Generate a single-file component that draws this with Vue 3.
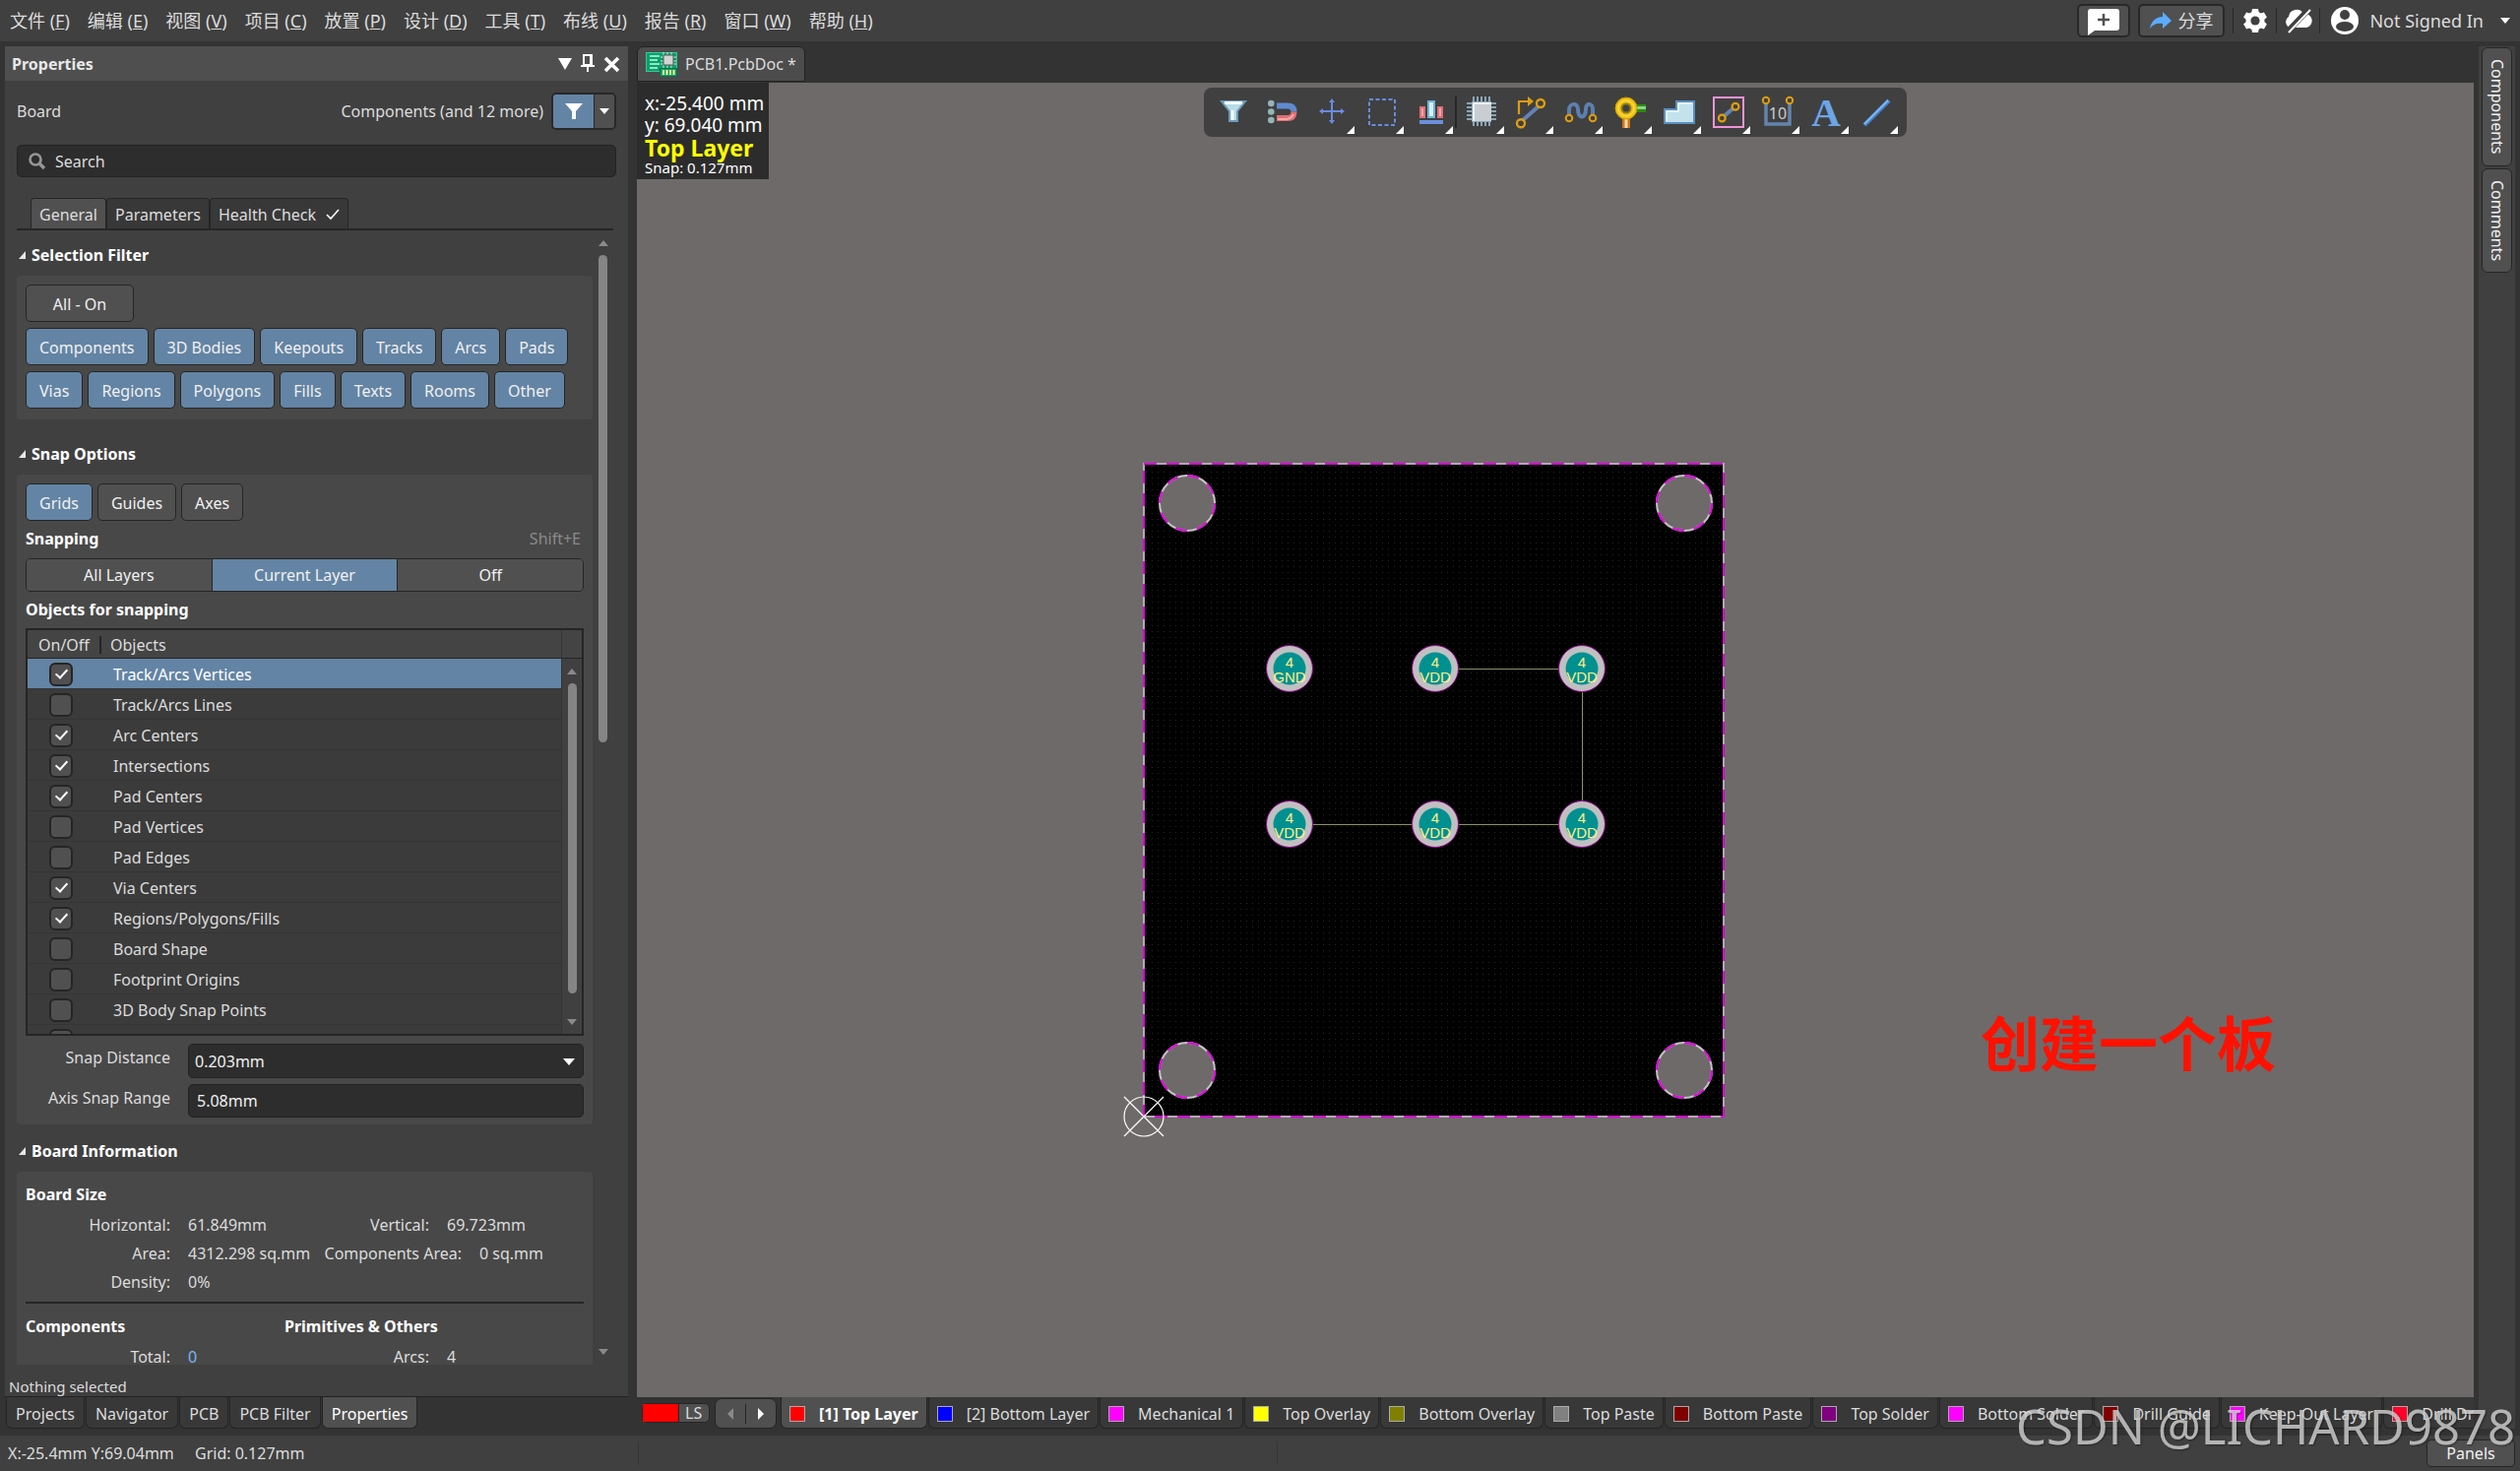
<script setup>
import { ref } from 'vue'

const menus = [
  ['文件', 'F'], ['编辑', 'E'], ['视图', 'V'], ['项目', 'C'], ['放置', 'P'], ['设计', 'D'],
  ['工具', 'T'], ['布线', 'U'], ['报告', 'R'], ['窗口', 'W'], ['帮助', 'H'],
]
const filterRows = [
  ['Components', '3D Bodies', 'Keepouts', 'Tracks', 'Arcs', 'Pads'],
  ['Vias', 'Regions', 'Polygons', 'Fills', 'Texts', 'Rooms', 'Other'],
]
const snapObjects = ref([
  { name: 'Track/Arcs Vertices', on: true },
  { name: 'Track/Arcs Lines', on: false },
  { name: 'Arc Centers', on: true },
  { name: 'Intersections', on: true },
  { name: 'Pad Centers', on: true },
  { name: 'Pad Vertices', on: false },
  { name: 'Pad Edges', on: false },
  { name: 'Via Centers', on: true },
  { name: 'Regions/Polygons/Fills', on: true },
  { name: 'Board Shape', on: false },
  { name: 'Footprint Origins', on: false },
  { name: '3D Body Snap Points', on: false },
  { name: '', on: false },
])
const panelTabs = ['Projects', 'Navigator', 'PCB', 'PCB Filter', 'Properties']
const layers = [
  ['[1] Top Layer', '#ff0000'], ['[2] Bottom Layer', '#0000ff'], ['Mechanical 1', '#ff00ff'],
  ['Top Overlay', '#ffff00'], ['Bottom Overlay', '#808000'], ['Top Paste', '#808080'],
  ['Bottom Paste', '#800000'], ['Top Solder', '#800080'], ['Bottom Solder', '#ff00ff'],
  ['Drill Guide', '#800000'], ['Keep-Out Layer', '#ff00ff'], ['Drill Drawing', '#ff002a'],
]
const holes = [[44, 40], [549, 40], [44, 616], [549, 616]]
const pads = [
  { x: 148, y: 208, net: 'GND' }, { x: 296, y: 208, net: 'VDD' }, { x: 445, y: 208, net: 'VDD' },
  { x: 148, y: 366, net: 'VDD' }, { x: 296, y: 366, net: 'VDD' }, { x: 445, y: 366, net: 'VDD' },
]
const search = ref('')
const snapDistance = ref('0.203mm')
const axisRange = ref('5.08mm')
</script>

<template>
  <div class="app">
    <header class="menubar">
      <nav class="menus">
        <a v-for="m in menus" :key="m[1]" href="#">{{ m[0] }} (<u>{{ m[1] }}</u>)</a>
      </nav>
      <div class="account">
        <button class="top-btn note" aria-label="Add comment">
          <svg width="32" height="28" viewBox="0 0 32 28"><path d="M3 0H29Q32 0 32 3V19Q32 22 29 22H7L0 27V3Q0 0 3 0Z" fill="#fff"/><path d="M16 5V17M10 11H22" stroke="#505050" stroke-width="2.5"/></svg>
        </button>
        <button class="top-btn share">
          <svg width="22" height="18" viewBox="0 0 22 18"><path d="M13 0L22 9L13 17V12C7 11 3 13 0 17C1 10 6 5 13 5Z" fill="#5cabff"/></svg>
          分享
        </button>
        <i class="sep"></i>
        <button class="icon-btn" aria-label="Settings">
          <svg width="26" height="26" viewBox="0 0 26 26"><g fill="#fff"><circle cx="13" cy="13" r="9.5"/><path d="M10 1H16L17 6H9Z"/><path d="M10 25H16L17 20H9Z"/><path d="M10 1H16L17 6H9Z" transform="rotate(60 13 13)"/><path d="M10 1H16L17 6H9Z" transform="rotate(120 13 13)"/><path d="M10 1H16L17 6H9Z" transform="rotate(240 13 13)"/><path d="M10 1H16L17 6H9Z" transform="rotate(300 13 13)"/></g><circle cx="13" cy="13" r="4.6" fill="#404040"/></svg>
        </button>
        <i class="sep"></i>
        <button class="icon-btn" aria-label="Cloud disconnected">
          <svg width="28" height="26" viewBox="0 0 28 26"><path d="M6 20A6 6 0 0 1 4 9A8 8 0 0 1 19 6A7 7 0 0 1 22 20Z" fill="#fff"/><path d="M2 25L24 2" stroke="#404040" stroke-width="6"/><path d="M4 25L26 2" stroke="#fff" stroke-width="2"/></svg>
        </button>
        <i class="sep"></i>
        <button class="user">
          <svg width="28" height="28" viewBox="0 0 28 28"><circle cx="14" cy="14" r="14" fill="#fff"/><circle cx="14" cy="8" r="5" fill="#404040"/><ellipse cx="14" cy="20" rx="9" ry="5" fill="#404040"/></svg>
          Not Signed In
          <svg class="caret" width="10" height="6" viewBox="0 0 10 6"><path d="M0 0H10L5 6Z" fill="#fff"/></svg>
        </button>
      </div>
    </header>

    <div class="work">
      <aside class="left">
        <section class="panel">
          <div class="panel-head">
            <h1>Properties</h1>
            <svg width="64" height="20" viewBox="0 0 64 20"><path d="M0 4H14L7 16Z" fill="#fff"/><path d="M26 1H34V11H26Z" fill="none" stroke="#fff" stroke-width="2"/><path d="M32 1H35V11H32ZM23 11H37V13H23ZM29 13H31V18H29Z" fill="#fff"/><path d="M48 4L61 17M61 4L48 17" stroke="#fff" stroke-width="3.6"/></svg>
          </div>
          <div class="scope">
            <span>Board</span>
            <span class="grow">Components (and 12 more)</span>
            <div class="split">
              <button class="funnel" aria-label="Filter"><svg width="18" height="16" viewBox="0 0 18 16"><path d="M0 0H18L11 8V16H7V8Z" fill="#fff"/></svg></button>
              <button class="drop" aria-label="Filter options"><svg width="10" height="6" viewBox="0 0 10 6"><path d="M0 0H10L5 6Z" fill="#fff"/></svg></button>
            </div>
          </div>
          <label class="search">
            <svg width="18" height="18" viewBox="0 0 18 18"><circle cx="7" cy="7" r="5.5" fill="none" stroke="#969696" stroke-width="2.6"/><path d="M11 11L16 16" stroke="#969696" stroke-width="3.4"/></svg>
            <input v-model="search" placeholder="Search" aria-label="Search">
          </label>
          <div class="tabs">
            <button class="active">General</button>
            <button>Parameters</button>
            <button>Health Check
              <svg width="14" height="12" viewBox="0 0 14 12"><path d="M1 6L5 10L13 1" fill="none" stroke="#fff" stroke-width="1.6"/></svg>
            </button>
          </div>

          <div class="scroll">
            <div class="sections">
              <h2>Selection Filter</h2>
              <div class="card filters">
                <div class="chips"><button class="chip all">All - On</button></div>
                <div v-for="(row, i) in filterRows" :key="i" class="chips">
                  <button v-for="c in row" :key="c" class="chip on">{{ c }}</button>
                </div>
              </div>

              <h2 class="snap-title">Snap Options</h2>
              <div class="card snap">
                <div class="chips">
                  <button class="chip on">Grids</button><button class="chip">Guides</button><button class="chip">Axes</button>
                </div>
                <div class="sub"><h3>Snapping</h3><span class="hint">Shift+E</span></div>
                <div class="segments"><button>All Layers</button><button class="on">Current Layer</button><button>Off</button></div>
                <div class="sub"><h3>Objects for snapping</h3></div>
                <div class="grid-box">
                  <table>
                    <thead><tr><th class="c1">On/Off</th><th>Objects</th></tr></thead>
                    <tbody>
                      <tr v-for="(o, i) in snapObjects" :key="i" :class="{ selected: i === 0 }">
                        <td><input v-model="o.on" type="checkbox" :aria-label="o.name || 'Snap object'"></td>
                        <td class="name">{{ o.name }}</td>
                      </tr>
                    </tbody>
                  </table>
                  <div class="bar inner">
                    <svg width="10" height="6" viewBox="0 0 10 6"><path d="M0 6H10L5 0Z" fill="#8a8a8a"/></svg>
                    <i></i>
                    <svg width="10" height="6" viewBox="0 0 10 6"><path d="M0 0H10L5 6Z" fill="#8a8a8a"/></svg>
                  </div>
                </div>
                <div class="field">
                  <label for="snap-distance">Snap Distance</label>
                  <div class="select">
                    <select id="snap-distance" v-model="snapDistance"><option>0.203mm</option></select>
                    <svg width="12" height="7" viewBox="0 0 12 7"><path d="M0 0H12L6 7Z" fill="#fff"/></svg>
                  </div>
                </div>
                <div class="field">
                  <label for="axis-range">Axis Snap Range</label>
                  <input id="axis-range" v-model="axisRange">
                </div>
              </div>

              <h2 class="info-title">Board Information</h2>
              <div class="card info">
                <h3>Board Size</h3>
                <dl>
                  <dt>Horizontal:</dt><dd>61.849mm</dd><dt class="v">Vertical:</dt><dd>69.723mm</dd>
                </dl>
                <dl>
                  <dt>Area:</dt><dd>4312.298 sq.mm</dd><dt class="a">Components Area:</dt><dd class="last">0 sq.mm</dd>
                </dl>
                <dl><dt>Density:</dt><dd>0%</dd></dl>
                <hr>
                <div class="halves"><h3>Components</h3><h3>Primitives &amp; Others</h3></div>
                <dl><dt>Total:</dt><dd class="link">0</dd><dt class="v">Arcs:</dt><dd>4</dd></dl>
              </div>
            </div>
            <div class="bar outer">
              <svg width="10" height="6" viewBox="0 0 10 6"><path d="M0 6H10L5 0Z" fill="#8a8a8a"/></svg>
              <i></i>
              <svg width="10" height="6" viewBox="0 0 10 6"><path d="M0 0H10L5 6Z" fill="#8a8a8a"/></svg>
            </div>
          </div>
          <p class="nothing">Nothing selected</p>
        </section>
        <nav class="panel-tabs">
          <button v-for="t in panelTabs" :key="t" :class="{ active: t === 'Properties' }">{{ t }}</button>
        </nav>
      </aside>

      <main class="editor">
        <div class="doc-tabs">
          <button class="doc">
            <svg width="32" height="26" viewBox="0 0 32 26"><rect x=".5" y="1.500" width="31" height="19" fill="#0ba06c" stroke="#35c795"/><path d="M4 5H14M4 9H12M4 13H14M4 17H12" stroke="#b8ffe0" stroke-width="1.500"/><path d="M18 1V5M22 1V5M26 1V5M18 14V18M22 14V18M26 14V18M15 6H31M15 10H31M15 13H31" stroke="#c8efe0"/><rect x="18" y="4" width="10" height="10" fill="#d4d4d4" stroke="#555"/><rect x="14.500" y="17.500" width="17" height="8" fill="#0ba06c" stroke="#0a6b4b"/><path d="M18 19V24M21.500 19V24M25 19V24M28.500 19V24" stroke="#fff38a" stroke-width="2"/></svg>
            PCB1.PcbDoc *
          </button>
        </div>
        <div class="canvas">
          <div class="heads-up">
            <p>x:-25.400 mm</p>
            <p>y: 69.040 mm</p>
            <p class="layer-name">Top Layer</p>
            <p class="small">Snap: 0.127mm</p>
          </div>

          <div class="toolbar">
            <button aria-label="Filter"><svg viewBox="0 0 50 50"><path d="M13 14H37L29 24V34H21V24Z" fill="#b9dce8" stroke="#6d9bb8" stroke-width="2"/><path d="M16 15.500H34M24 23V33" stroke="#f2fbff" stroke-width="3"/></svg></button>
            <button aria-label="Snapping"><svg viewBox="0 0 50 50"><g fill="#94b5b8"><circle cx="13.300" cy="16" r="3.300"/><circle cx="13.300" cy="24.500" r="3.300"/><circle cx="13.300" cy="33" r="3.300"/></g><path d="M19 18.500H30Q36.500 18.500 36.500 24.500" fill="none" stroke="#5f8ad0" stroke-width="6"/><path d="M19 31H30Q36.500 31 36.500 24.500" fill="none" stroke="#dd6f77" stroke-width="6"/><path d="M20 32H29Q34 31.500 36 27" fill="none" stroke="#f7a6a6" stroke-width="2"/></svg></button>
            <button class="more" aria-label="Move"><svg viewBox="0 0 50 50"><path d="M25 13V35M14 24H36" stroke="#6a8be0" stroke-width="2"/><path d="M25 11L28 15H22ZM25 37L28 33H22ZM12 24L16 21V27ZM38 24L34 21V27Z" fill="#6a8be0"/></svg></button>
            <button class="more" aria-label="Select area"><svg viewBox="0 0 50 50"><rect x="13" y="12" width="26" height="26" fill="none" stroke="#6a8be0" stroke-width="2" stroke-dasharray="4 2.500"/></svg></button>
            <button class="more" aria-label="Align"><svg viewBox="0 0 50 50"><path d="M14 19H20V31H14ZM32 19H38V31H32Z" fill="#dc7078"/><path d="M17 21V29M35 21V29" stroke="#f7a6a6" stroke-width="2"/><path d="M22 13H30V31H22Z" fill="#6fb4d8"/><path d="M26 15V29" stroke="#d2f0fa" stroke-width="4"/><path d="M14 33H38V37H14Z" fill="#6a8fdc"/></svg></button>
            <i></i>
            <button class="more" aria-label="Place component"><svg viewBox="0 0 50 50"><path d="M17 9V39M21 9V39M25 9V39M29 9V39M33 9V39M10 16H40M10 20H40M10 24H40M10 28H40M10 32H40" stroke="#8aa5b5" stroke-width="2"/><rect x="15" y="14" width="20" height="21" fill="#8aa5b5"/><rect x="16" y="15" width="19" height="19" fill="#eef2f5"/><rect x="18" y="17" width="17" height="17" fill="#c9ced3"/></svg></button>
            <button class="more" aria-label="Route track"><svg viewBox="0 0 50 50"><path d="M17 33L33 19" stroke="#6482b4" stroke-width="4"/><path d="M13 27V14H24" fill="none" stroke="#dd9d12" stroke-width="2.200"/><path d="M22 9L28 14L22 19Z" fill="#dd9d12"/><g fill="#404040" stroke="#dd9d12" stroke-width="2.400"><circle cx="15" cy="36.300" r="4"/><circle cx="35" cy="16" r="4"/></g></svg></button>
            <button class="more" aria-label="Tune length"><svg viewBox="0 0 50 50"><path d="M14 27V23C14 15 23 15 23 22C23 32 31 32 31 22C31 15 38 15 38 23V27" fill="none" stroke="#5d7fb0" stroke-width="4"/><g fill="#404040" stroke="#dd9d12" stroke-width="2"><circle cx="14" cy="31" r="3.300"/><circle cx="38" cy="31" r="3.300"/></g></svg></button>
            <button class="more" aria-label="Place via"><svg viewBox="0 0 50 50"><path d="M32 17H42V25H32Z" fill="#2e8a0e"/><path d="M33 20.500H42" stroke="#8ad48a" stroke-width="3"/><path d="M18 31H26V41H18Z" fill="#cf7618"/><path d="M22 31V41" stroke="#ffd9a8" stroke-width="3"/><circle cx="22" cy="21" r="11" fill="#f1c40d" stroke="#c99a06"/><circle cx="22" cy="21" r="8" fill="none" stroke="#fbe36a"/><circle cx="22" cy="21" r="4.500" fill="#404040" stroke="#8d7a1b" stroke-width="2"/></svg></button>
            <button class="more" aria-label="Place polygon"><svg viewBox="0 0 50 50"><path d="M11 22H23V14H41V36H11Z" fill="#c4e2ec" stroke="#5b8ec0" stroke-width="2"/><path d="M13 34V24H25V16H39" fill="none" stroke="#eef9fc" stroke-width="1.500"/></svg></button>
            <button class="more" aria-label="Place track"><svg viewBox="0 0 50 50"><rect x="11" y="10" width="30" height="30" fill="none" stroke="#f093d6" stroke-width="2"/><path d="M20 30L32 20" stroke="#6482b4" stroke-width="4"/><g fill="#404040" stroke="#dd9d12" stroke-width="2.200"><circle cx="19.300" cy="31" r="3.400"/><circle cx="33" cy="19.300" r="3.400"/></g></svg></button>
            <button class="more" aria-label="Place dimension"><svg viewBox="0 0 50 50"><path d="M14 16V37H38V16" fill="none" stroke="#6384ac" stroke-width="3.500"/><g fill="#404040" stroke="#dd9d12" stroke-width="2"><circle cx="14" cy="13" r="3.200"/><circle cx="38" cy="13" r="3.200"/></g><text x="26" y="32" text-anchor="middle" font-size="16" fill="#ccc">10</text></svg></button>
            <button class="more letter" aria-label="Place text">A</button>
            <button class="more" aria-label="Place line"><svg viewBox="0 0 50 50"><path d="M14 38L39 13" stroke="#4583cc" stroke-width="4.500"/><path d="M14 37L38 13" stroke="#7db7f2" stroke-width="2"/></svg></button>
          </div>

          <svg class="board" width="620" height="700" viewBox="-24 -10 620 700">
            <defs>
              <pattern id="dots" width="6" height="6" patternUnits="userSpaceOnUse"><rect x="2" y="2" width="1" height="1" fill="#262626"/></pattern>
            </defs>
            <rect width="589" height="663" fill="#000"/>
            <rect width="589" height="663" fill="url(#dots)"/>
            <rect width="589" height="663" fill="none" stroke="#b8a4b8" stroke-width="2"/>
            <rect width="589" height="663" fill="none" stroke="#d800d8" stroke-width="2" stroke-dasharray="13 10"/>
            <g v-for="(h, i) in holes" :key="i" fill="none" stroke-width="2">
              <circle :cx="h[0]" :cy="h[1]" r="28" fill="#6e6a69" stroke="#c8c0c8"/>
              <circle :cx="h[0]" :cy="h[1]" r="28" stroke="#e000e0" stroke-dasharray="12 10"/>
            </g>
            <path d="M296 208H445V366H148" fill="none" stroke="#8c9168" shape-rendering="crispEdges"/>
            <g v-for="(p, i) in pads" :key="'p' + i">
              <circle :cx="p.x" :cy="p.y" r="23.500" fill="#c0c0c0" stroke="#950095"/>
              <circle :cx="p.x" :cy="p.y" r="16.500" fill="#009090"/>
              <text class="pad-text" :x="p.x" :y="p.y - 1">4</text>
              <text class="pad-text" :x="p.x" :y="p.y + 14">{{ p.net }}</text>
            </g>
            <g fill="none" stroke="#fff" stroke-width="1.200"><circle cx="0" cy="663" r="20"/><path d="M-20 643L20 683M20 643L-20 683"/></g>
          </svg>
          <p class="note-text">创建一个板</p>
        </div>
        <div class="layers">
          <button class="ls"><i></i>LS</button>
          <div class="arrows">
            <button aria-label="Previous layer"><svg width="6" height="12" viewBox="0 0 6 12"><path d="M6 0V12L0 6Z" fill="#8a8a8a"/></svg></button>
            <button aria-label="Next layer"><svg width="6" height="12" viewBox="0 0 6 12"><path d="M0 0V12L6 6Z" fill="#fff"/></svg></button>
          </div>
          <div class="layer-tabs">
            <button v-for="(l, i) in layers" :key="l[0]" :class="{ active: i === 0 }"><i :style="{ background: l[1] }"></i>{{ l[0] }}</button>
          </div>
        </div>
      </main>

      <aside class="right">
        <button>Components</button>
        <button>Comments</button>
      </aside>
    </div>

    <footer class="status">
      <span class="pos">X:-25.4mm Y:69.04mm</span>
      <span class="grid">Grid: 0.127mm</span>
      <i class="mark"></i>
      <button>Panels</button>
    </footer>
    <div class="watermark">CSDN @LICHARD9878</div>
  </div>
</template>

<style>
body { margin: 0; background: #333; }
</style>

<style scoped>
* { box-sizing: border-box; }
.app {
  position: relative; display: flex; flex-direction: column; height: 100vh; overflow: hidden;
  background: #333; color: #dcdcdc; font: 16px/24px "Noto Sans", "Noto Sans CJK SC", sans-serif;
}
button, input, select { font: inherit; color: inherit; margin: 0; padding: 0; border: 0; background: none; }
button { display: flex; align-items: center; justify-content: center; white-space: nowrap; }
h1, h2, h3, p, dl, dd { margin: 0; }
h1, h2, h3 { font-size: 16px; line-height: 24px; color: #fff; }
svg { flex: none; display: block; }

.menubar { flex: none; height: 42px; display: flex; justify-content: space-between; align-items: center; background: #404040; padding: 0 10px; font-size: 18px; }
.menus { display: flex; gap: 18px; }
.menus a { color: inherit; text-decoration: none; }
.account { display: flex; align-items: center; }
.top-btn { height: 34px; border: 2px solid #282828; border-radius: 5px; background: #505050; }
.note { width: 54px; padding-top: 3px; }
.share { width: 88px; margin: 0 8px; gap: 6px; }
.sep { width: 1px; height: 26px; background: #282828; }
.icon-btn { width: 43px; }
.user { gap: 11px; padding-left: 11px; }
.caret { margin-left: 6px; }

.work { flex: 1; min-height: 0; display: flex; padding: 5px 5px 7px; }
.left { width: 633px; flex: none; display: flex; flex-direction: column; }
.panel { flex: 1; min-height: 0; display: flex; flex-direction: column; background: #404040; border-bottom: 1px solid #222; }
.panel-head { height: 35px; flex: none; display: flex; align-items: center; justify-content: space-between; background: #4f4f4f; padding: 0 7px; }
.panel-head h1 { color: #e8e8e8; }
.scope { display: flex; align-items: center; margin: 12px 12px 0; height: 38px; }
.grow { margin-left: auto; margin-right: 8px; }
.split { display: flex; height: 38px; border: 2px solid #282828; border-radius: 5px; overflow: hidden; }
.funnel { width: 42px; background: #6384a4; border-right: 1px solid #282828; }
.drop { width: 20px; background: #505050; }
.search { display: flex; align-items: center; gap: 9px; height: 33px; flex: none; margin: 15px 12px 0; padding: 0 11px; background: #2d2d2d; border: 1px solid #222; border-radius: 5px; }
.search input { flex: 1; outline: 0; }
.search input::placeholder { color: #dcdcdc; opacity: 1; }
.tabs { display: flex; flex: none; margin: 21px 15px 0 12px; padding-left: 14px; border-bottom: 2px solid #252525; }
.tabs button { height: 31px; padding: 1px 8px 0; gap: 10px; border: 1px solid #252525; border-bottom: 0; border-radius: 4px 4px 0 0; background: #383838; }
.tabs .active { background: #505050; }

.scroll { flex: 1; min-height: 0; overflow: hidden; display: flex; gap: 6px; margin-left: 12px; padding-top: 13px; margin-bottom: 12px; }
.sections { width: 585px; flex: none; }
.scroll h2 { position: relative; padding-left: 15px; }
.scroll h2::before { content: ""; position: absolute; left: 2px; top: 8px; width: 7px; height: 8px; background: #e8e8e8; clip-path: polygon(100% 0, 100% 100%, 0 100%); }
.scroll .snap-title { margin-top: 23px; }
.scroll .info-title { margin-top: 15px; }
.card { background: #484848; border-radius: 4px; padding: 9px; }
.filters { margin-top: 9px; height: 146px; }
.chips { display: flex; gap: 5px; margin-bottom: 6px; }
.chip { height: 38px; padding: 1px 13px 0; border: 1px solid #252525; border-radius: 5px; background: #505050; color: #f0f0f0; }
.chip.all { width: 110px; }
.chip.on { background: #6384a4; }
.snap { margin-top: 9px; height: 660px; }
.sub { display: flex; justify-content: space-between; height: 24px; }
.hint { color: #8a8a8a; padding-right: 3px; }
.segments { display: flex; height: 34px; margin: 8px 0 6px; border: 1px solid #252525; border-radius: 5px; overflow: hidden; }
.segments button { flex: 1; background: #505050; color: #f0f0f0; }
.segments button + button { border-left: 1px solid #252525; }
.segments .on { background: #6384a4; }
.grid-box { display: flex; height: 414px; margin-top: 7px; border: 2px solid #252525; background: #3b3b3b; overflow: hidden; }
table { width: 542px; border-collapse: collapse; align-self: flex-start; }
th { height: 29px; padding: 0 0 0 9px; font-weight: 400; text-align: left; background: #444; box-shadow: inset 0 -1px #252525; }
th.c1 { width: 75px; padding-left: 11px; background: linear-gradient(#252525, #252525) no-repeat right center / 2px 18px #444; }
td { height: 31px; padding: 0 0 0 12px; box-shadow: inset 0 -1px #353535; }
td:first-child { padding-left: 22px; }
.selected td { background: #6384a4; color: #fff; }
td input { appearance: none; position: relative; display: block; width: 24px; height: 24px; border: 2px solid #252525; border-radius: 6px; background: #505050; }
td input:checked::after { content: ""; position: absolute; left: 7px; top: 2px; width: 5px; height: 10px; border: solid #fff; border-width: 0 2px 2px 0; transform: rotate(42deg); }
.bar { display: flex; flex-direction: column; align-items: center; }
.bar i { width: 9px; border-radius: 5px; background: #858585; }
.inner { flex: 1; background: linear-gradient(#444 28px, #252525 28px, #252525 29px, #404040 29px); border-left: 1px solid #353535; padding-top: 39px; }
.inner i { height: 315px; margin: 9px 0 26px; }
.outer { width: 9px; height: 1140px; margin-top: -3px; }
.outer i { flex: none; height: 495px; margin: 9px 0 616px; }
.field { display: flex; height: 35px; margin-top: 6px; }
.field + .field { height: 34px; }
.field label { width: 147px; text-align: right; line-height: 28px; margin-right: 18px; }
.select { flex: 1; position: relative; }
.select svg { position: absolute; right: 9px; top: 15px; }
.field select, .field > input { height: 100%; width: 100%; border: 1px solid #222; border-radius: 5px; background: #2d2d2d; color: #f0f0f0; padding: 0 6px; appearance: none; }
.field > input { flex: 1; width: auto; padding: 0 8px; }
.grid-box + .field { margin-top: 8px; }
.info { margin-top: 9px; height: 260px; padding-top: 11px; }
dl { display: flex; height: 29px; align-items: center; }
.info h3 + dl { margin-top: 4px; }
dt { flex: none; width: 147px; text-align: right; margin-right: 18px; white-space: nowrap; }
dd { flex: none; width: 136px; white-space: nowrap; }
dt.v { width: 109px; }
dt.a { width: 142px; }
dd.last { width: auto; }
.link { color: #7db4f0; }
hr { border: 0; height: 2px; background: #252525; margin: 6px 0 11px; }
.halves { display: flex; margin-bottom: 4px; }
.halves h3 { width: 263px; }
.nothing { height: 20px; line-height: 20px; padding-left: 4px; font-size: 15px; flex: none; }
.panel-tabs { display: flex; height: 32px; flex: none; gap: 1px; padding-left: 1px; }
.panel-tabs button, .layer-tabs button { padding: 2px 9px 0; border: 1px solid #252525; border-top: 0; border-radius: 0 0 6px 6px; background: #383838; }
.panel-tabs .active, .layer-tabs .active { background: #505050; color: #fff; }

.editor { flex: 1; min-width: 0; display: flex; flex-direction: column; margin-left: 9px; }
.doc-tabs { height: 37px; flex: none; display: flex; }
.doc { height: 36px; gap: 8px; padding: 0 8px; border: 1px solid #222; border-radius: 6px 6px 0 0; background: #4c4c4c; }
.canvas { flex: 1; position: relative; background: #6e6a69; overflow: hidden; min-height: 0; }
.heads-up { position: absolute; left: 0; top: 0; width: 134px; height: 98px; padding: 10px 0 0 8px; background: #2c2c2c; color: #fff; font-size: 19px; line-height: 22px; white-space: nowrap; }
.layer-name { color: #ff0; font-weight: 700; font-size: 23px; line-height: 24px; }
.small { font-size: 15px; line-height: 16px; }
.toolbar { position: absolute; left: 576px; top: 5px; display: flex; align-items: center; height: 50px; padding: 0 7px 0 5px; background: #404040; border-radius: 8px; }
.toolbar button { position: relative; width: 50px; height: 50px; }
.toolbar button svg { width: 50px; height: 50px; }
.toolbar > i { width: 2px; height: 32px; background: #252525; }
.more::after { content: ""; position: absolute; right: 2px; bottom: 3px; width: 8px; height: 8px; background: #fff; clip-path: polygon(100% 0, 100% 100%, 0 100%); }
.toolbar .letter { font: 700 41px/48px "Liberation Serif", serif; color: #6ba5e7; }
.board { position: absolute; left: 491px; top: 377px; }
.pad-text { font: 15px "Liberation Sans Narrow", "Liberation Sans", sans-serif; fill: #ffef8a; text-anchor: middle; }
.note-text { position: absolute; right: 201px; top: 936px; font-size: 60px; line-height: 80px; font-weight: 700; color: #f10; }
.layers { height: 32px; flex: none; display: flex; align-items: flex-start; padding-left: 5px; }
.ls { height: 20px; width: 69px; margin-top: 6px; justify-content: flex-start; gap: 6px; border: 1px solid #252525; border-radius: 5px; background: #505050; }
.ls i { width: 37px; height: 18px; background: #f00; border-right: 1px solid #252525; }
.arrows { display: flex; width: 63px; height: 31px; margin: 1px 4px 0 5px; border: 1px solid #252525; border-radius: 7px; background: #505050; align-items: center; }
.arrows button { flex: 1; height: 20px; }
.arrows button + button { border-left: 1px solid #252525; }
.layer-tabs { flex: 1; min-width: 0; display: flex; gap: 1px; overflow: hidden; height: 32px; }
.layer-tabs button { flex: none; padding: 2px 8px 0; gap: 14px; }
.layer-tabs i { width: 16px; height: 16px; border: 1px solid #aaa; }
.layer-tabs .active { font-weight: 700; }

.right { width: 37px; flex: none; margin-left: 5px; background: #404040; display: flex; flex-direction: column; align-items: center; gap: 2px; padding-top: 1px; }
.right button { writing-mode: vertical-rl; width: 31px; padding: 11px 0; border: 1px solid #252525; border-radius: 6px; background: #505050; color: #f0f0f0; }

.status { flex: none; height: 36px; display: flex; align-items: center; background: #404040; padding: 0 5px 0 8px; }
.pos { width: 190px; }
.grid { width: 451px; border-right: 1px solid #353535; }
.mark { width: 649px; height: 24px; border-right: 1px solid #353535; }
.status button { width: 90px; height: 28px; margin-left: auto; border: 1px solid #252525; border-radius: 5px; background: #505050; color: #f0f0f0; }
.watermark { position: absolute; right: 5px; bottom: 11px; font-size: 49px; line-height: 70px; color: rgba(225, 225, 225, .75); text-shadow: 1px 1px 2px rgba(0, 0, 0, .4); pointer-events: none; white-space: nowrap; }
</style>
